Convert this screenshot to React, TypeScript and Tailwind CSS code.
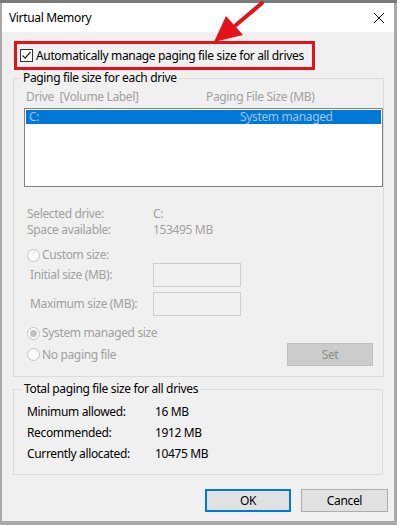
import React from "react";

const dis = "text-[#a0a0a0]";

function Radio({ checked }: { checked?: boolean }) {
  return (
    <span className="w-[13px] h-[13px] rounded-full border border-[#c4c4c4] bg-[#fbfbfb] flex items-center justify-center shrink-0">
      {checked && <span className="w-[7px] h-[7px] rounded-full bg-[#c0c0c0]" />}
    </span>
  );
}

export default function App() {
  return (
    <div
      className="w-[397px] h-[525px] bg-[#a9a9a9] flex flex-col overflow-hidden text-[12px] leading-4 tracking-[-0.35px] text-black"
      style={{ fontFamily: '"Noto Sans", "Open Sans", sans-serif' }}
    >
      <div className="h-[3px] bg-[#7a7a7a] shrink-0" />
      <div className="flex-1 flex flex-col ml-[2px] mr-[3px] mb-[4px] relative">
        {/* title bar */}
        <div className="h-[29px] bg-white flex items-center justify-between pl-[7px] pr-[9px] shrink-0">
          <span className="text-[12px]">Virtual Memory</span>
          <svg width="12" height="12" viewBox="0 0 12 12">
            <path d="M1 1 L11 11 M11 1 L1 11" stroke="#111" strokeWidth="1" />
          </svg>
        </div>
        {/* body */}
        <div className="flex-1 bg-[#f0f0f0] pl-[11px] pt-[9px] flex flex-col">
          <div className="ml-[1px] w-[301px] h-[29px] border-[3px] border-[#e3121b] flex items-center pl-[3px] gap-[3px]">
            <span className="w-[13px] h-[13px] border border-[#333] bg-white flex items-center justify-center">
              <svg width="11" height="11" viewBox="0 0 11 11">
                <path d="M1.5 5.5 L4.2 8.2 L9.5 2" stroke="#222" strokeWidth="1.2" fill="none" />
              </svg>
            </span>
            <span className="whitespace-nowrap">Automatically manage paging file size for all drives</span>
          </div>

          <fieldset className="w-[370px] border border-[#dcdcdc] pb-[10px]">
            <legend className="ml-[7px] px-[2px] leading-4">Paging file size for each drive</legend>
            <div className={`mt-[3px] h-4 flex ${dis}`}>
              <span className="ml-[12px] w-[180px] whitespace-nowrap">Drive&nbsp; [Volume Label]</span>
              <span className="whitespace-nowrap">Paging File Size (MB)</span>
            </div>
            <div className="mt-[3px] ml-[10px] w-[359px] h-[79px] border border-[#828282] bg-white p-[1px]">
              <div className="h-[14px] bg-[#0078d7] flex items-center text-[#9ec4ea] leading-[14px]">
                <span className="ml-[3px] w-[211px]">C:</span>
                <span>System managed</span>
              </div>
            </div>
            <div className={`mt-[19px] flex ${dis}`}>
              <span className="ml-[13px] w-[126px]">Selected drive:</span>
              <span>C:</span>
            </div>
            <div className={`flex ${dis}`}>
              <span className="ml-[13px] w-[126px]">Space available:</span>
              <span>153495 MB</span>
            </div>
            <div className={`mt-[9px] ml-[13px] flex items-center gap-[2px] ${dis}`}>
              <Radio />
              <span>Custom size:</span>
            </div>
            <div className={`flex items-center h-[24px] ${dis}`}>
              <span className="ml-[16px] w-[123px]">Initial size (MB):</span>
              <span className="w-[88px] h-[24px] border border-[#cccccc] bg-[#f0f0f0]" />
            </div>
            <div className={`mt-[5px] flex items-center h-[24px] ${dis}`}>
              <span className="ml-[16px] w-[123px]">Maximum size (MB):</span>
              <span className="w-[88px] h-[24px] border border-[#cccccc] bg-[#f0f0f0]" />
            </div>
            <div className={`mt-[9px] ml-[13px] flex items-center gap-[2px] ${dis}`}>
              <Radio checked />
              <span>System managed size</span>
            </div>
            <div className={`mt-[2px] h-[23px] flex items-center ${dis}`}>
              <div className="ml-[13px] w-[260px] flex items-center gap-[2px]">
                <Radio />
                <span>No paging file</span>
              </div>
              <span className="w-[86px] h-[23px] bg-[#cccccc] border border-[#bfbfbf] flex items-center justify-center text-[#8a8a8a]">
                Set
              </span>
            </div>
          </fieldset>

          <fieldset className="mt-[4px] w-[370px] border border-[#dcdcdc] pb-[10px]">
            <legend className="ml-[8px] px-[2px] leading-4">Total paging file size for all drives</legend>
            <div className="mt-[4px] flex leading-[21px]">
              <span className="ml-[13px] w-[128px]">Minimum allowed:</span>
              <span>16 MB</span>
            </div>
            <div className="flex leading-[21px]">
              <span className="ml-[13px] w-[128px]">Recommended:</span>
              <span>1912 MB</span>
            </div>
            <div className="flex leading-[21px]">
              <span className="ml-[13px] w-[128px]">Currently allocated:</span>
              <span>10475 MB</span>
            </div>
          </fieldset>

          <div className="mt-[14px] flex gap-[10px] pl-[192px]">
            <span className="w-[86px] h-[23px] bg-[#e1e1e1] border-2 border-[#0078d7] flex items-center justify-center">
              OK
            </span>
            <span className="w-[87px] h-[23px] bg-[#e1e1e1] border border-[#adadad] flex items-center justify-center">
              Cancel
            </span>
          </div>
        </div>
      </div>

      {/* annotation arrow */}
      <svg className="absolute left-0 top-0 pointer-events-none" width="397" height="80" viewBox="0 0 397 80">
        <path d="M262 3 L236 25" stroke="#e3121b" strokeWidth="4" strokeLinecap="round" />
        <polygon points="214,42 226,16 243,35" fill="#e3121b" />
      </svg>
    </div>
  );
}
